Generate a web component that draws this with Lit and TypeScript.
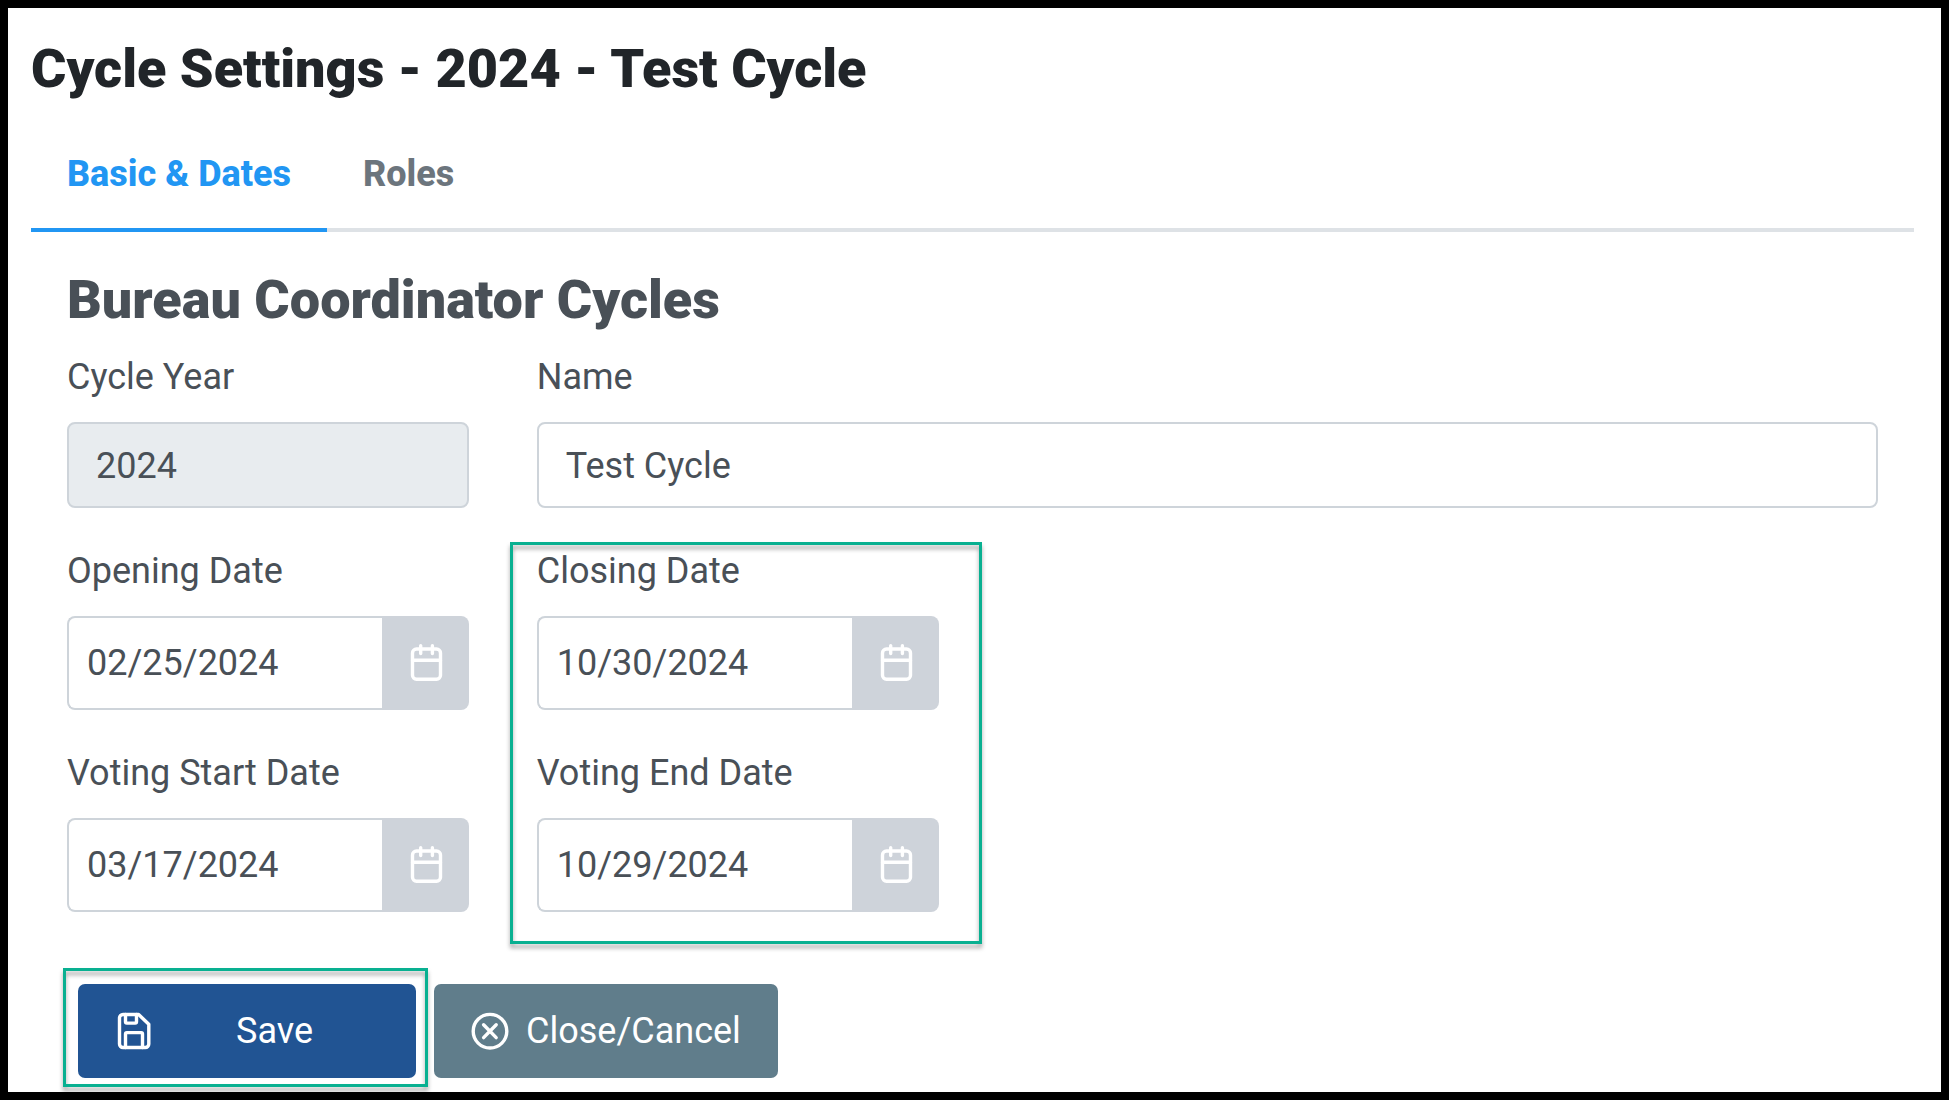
import { LitElement, html, css, svg } from "lit";
import { customElement, property, state } from "lit/decorators.js";

const calendarIcon = svg`
  <rect x="4.5" y="4" width="28" height="30.3" rx="4"></rect>
  <path d="M4.5 15.2H32.5M12.7 .8V8.6M24.4 .8V8.6"></path>`;

const saveIcon = svg`
  <path d="M7 1.5H22.6L32.8 11.2V31a3.5 3.5 0 0 1-3.5 3.5H7A3.5 3.5 0 0 1 3.5 31V5A3.5 3.5 0 0 1 7 1.5Z"></path>
  <path d="M9.5 1.5V8.8a1.3 1.3 0 0 0 1.3 1.3h8.4a1.3 1.3 0 0 0 1.3-1.3V1.5M9.5 34.5V20.9a1.3 1.3 0 0 1 1.3-1.3h14.4a1.3 1.3 0 0 1 1.3 1.3V34.5"></path>`;

const cancelIcon = svg`
  <circle cx="18" cy="18.2" r="16.8"></circle>
  <path d="M11.6 11.8 24.2 24.6M24.2 11.8 11.6 24.6"></path>`;

const icon = (shape: unknown) =>
  html`<svg class="icon" viewBox="0 0 36 36" aria-hidden="true">${shape}</svg>`;

const base = css`
  *, *::before, *::after { box-sizing: border-box; }
  button, input { font: inherit; margin: 0; }
  .icon {
    width: 36px;
    height: 36px;
    flex: none;
    overflow: visible;
    fill: none;
    stroke: currentColor;
    stroke-width: 3.4;
    stroke-linecap: round;
    stroke-linejoin: round;
  }
`;

@customElement("form-field")
class FormField extends LitElement {
  @property() label = "";
  @property() value = "";
  @property({ type: Boolean }) disabled = false;
  @property({ type: Boolean }) date = false;

  static styles = [base, css`
    :host { display: block; min-width: 0; }
    .label { display: block; line-height: 54px; margin-bottom: 18px; }
    .box { display: flex; }
    .input {
      flex: 1;
      width: 100%;
      min-width: 0;
      height: 86px;
      padding: 2px 27px 0;
      border: 2px solid #ced4da;
      border-radius: 8px;
      background: #fff;
      color: #495057;
    }
    .input:disabled { background: #e8ecef; opacity: 1; }
    .input.dated {
      height: 94px;
      padding: 0 18px;
      border-right: 0;
      border-radius: 8px 0 0 8px;
    }
    .trigger {
      display: flex;
      align-items: center;
      justify-content: center;
      width: 87px;
      padding: 0 0 0 1px;
      border: 0;
      border-radius: 0 8px 8px 0;
      background: #ced3da;
      color: #fff;
    }
  `];

  render() {
    return html`
      <label class="label" for="control">${this.label}</label>
      <div class="box">
        <input id="control" type="text" class="input ${this.date ? "dated" : ""}"
          .value=${this.value} ?disabled=${this.disabled}>
        ${this.date
          ? html`<button class="trigger" type="button" aria-label="Choose date">${icon(calendarIcon)}</button>`
          : null}
      </div>`;
  }
}

@customElement("app-root")
class AppRoot extends LitElement {
  @state() private tab = 0;

  static styles = [base, css`
    :host {
      display: block;
      min-height: 100vh;
      padding: 29px 27px 14px 23px;
      box-sizing: border-box;
      border: 8px solid #000;
      background: #fff;
      color: #495057;
      font-family: Roboto, "Liberation Sans", sans-serif;
      font-size: 36px;
    }
    .title, .heading { margin: 0; font-size: 54px; line-height: 64px; font-weight: 900; }
    .title { margin-bottom: 19px; color: #212529; }
    .heading { margin-bottom: 18px; }
    .tabs { display: flex; box-shadow: inset 0 -4px #dee2e6; }
    .tab {
      padding: 36px;
      border: 0;
      border-bottom: 4px solid transparent;
      background: none;
      color: #6c757d;
      font-weight: 800;
      line-height: 36px;
    }
    .tab.active { color: #2196f3; border-color: #2196f3; }
    .panel { padding: 36px 36px 0; }
    .fields {
      position: relative;
      display: grid;
      grid-template-columns: repeat(4, minmax(0, 1fr));
      gap: 36px 68px;
    }
    .start { grid-column: 1; }
    .wide { grid-column: span 3; }
    .highlight {
      position: absolute;
      border: 3px solid #09b091;
      filter: drop-shadow(0 4px 2px rgba(0, 0, 0, 0.35));
      pointer-events: none;
    }
    .dates-highlight { grid-area: 2 / 2 / 4 / 3; inset: -2px -43px -32px -27px; }
    .save-highlight { inset: -16px -12px -9px -15px; }
    .actions { display: flex; gap: 18px; padding: 72px 0 0 11px; }
    .save { position: relative; display: flex; }
    .button {
      display: flex;
      align-items: center;
      gap: 18px;
      height: 94px;
      padding: 0 37px 0 38px;
      border: 0;
      border-radius: 7px;
      background: #607d8b;
      color: #fff;
    }
    .button.primary { min-width: 338px; background: #215493; }
    .caption { flex: 1; text-align: center; }
  `];

  render() {
    return html`
      <h1 class="title">Cycle Settings - 2024 - Test Cycle</h1>
      <div class="tabs" role="tablist">
        ${["Basic & Dates", "Roles"].map((name, i) => html`
          <button class="tab ${this.tab === i ? "active" : ""}" type="button" role="tab"
            aria-selected=${this.tab === i ? "true" : "false"}
            @click=${() => { this.tab = i; }}>${name}</button>`)}
      </div>
      <form class="panel" @submit=${(e: Event) => e.preventDefault()}>
        <h2 class="heading">Bureau Coordinator Cycles</h2>
        <div class="fields">
          <form-field label="Cycle Year" value="2024" disabled></form-field>
          <form-field class="wide" label="Name" value="Test Cycle"></form-field>
          <form-field class="start" label="Opening Date" value="02/25/2024" date></form-field>
          <form-field label="Closing Date" value="10/30/2024" date></form-field>
          <form-field class="start" label="Voting Start Date" value="03/17/2024" date></form-field>
          <form-field label="Voting End Date" value="10/29/2024" date></form-field>
          <div class="highlight dates-highlight"></div>
        </div>
        <div class="actions">
          <div class="save">
            <button class="button primary" type="submit">${icon(saveIcon)}<span class="caption">Save</span></button>
            <div class="highlight save-highlight"></div>
          </div>
          <button class="button" type="button">${icon(cancelIcon)}<span class="caption">Close/Cancel</span></button>
        </div>
      </form>`;
  }
}
